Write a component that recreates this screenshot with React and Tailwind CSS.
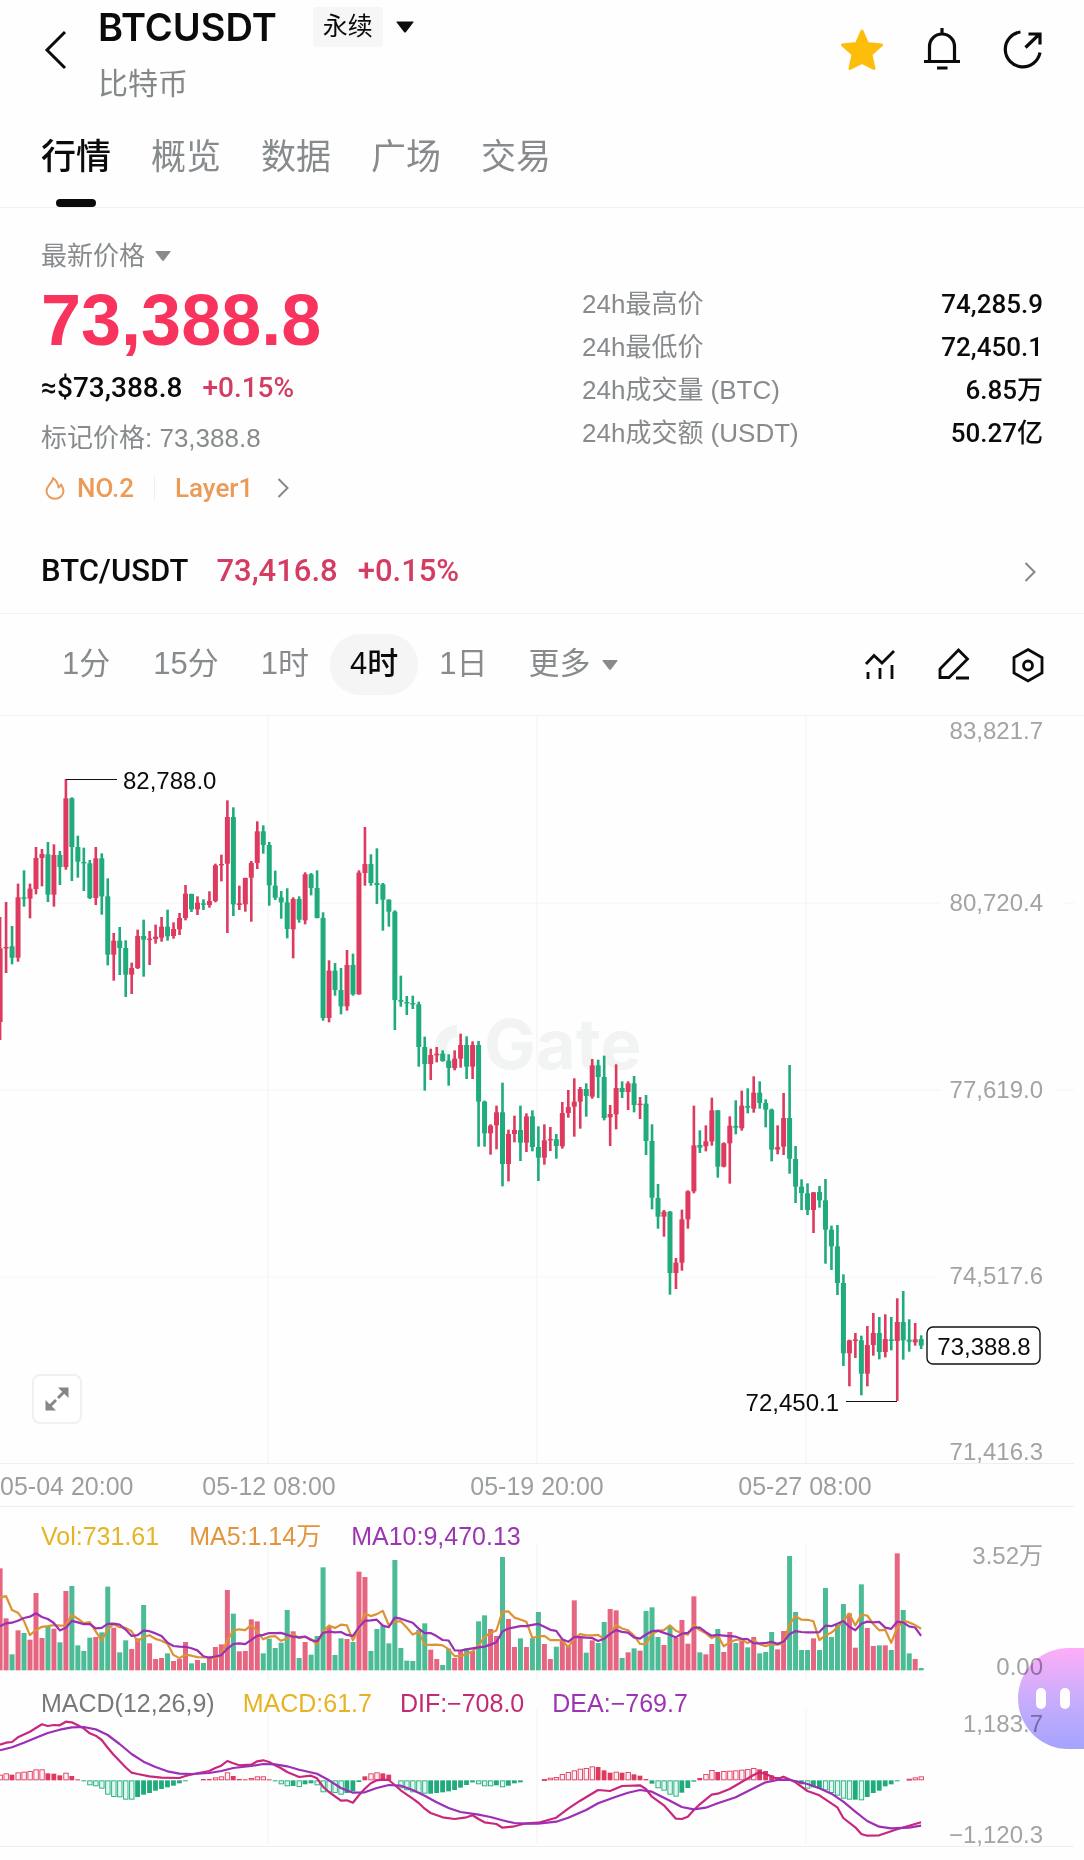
import React from "react";

const UP = "#de3a5f";
const DOWN = "#1fab7b";
const STEP = 5.981;
const FONT = '"Liberation Sans", "Noto Sans CJK SC", sans-serif';

// Each candle: direction, high, body top, body bottom, low (thirds of a pixel below the chart origin)
const CANDLES = `
R618,712,933,987 R573,708,711,786 G645,706,740,760 R518,559,740,752 G478,559,563,587 R518,533,563,622
R408,441,534,550 R414,429,441,526 G393,430,551,573 R400,432,551,587 G420,432,468,522 R204,262,468,476
G259,262,408,510 G374,408,452,500 G410,453,457,540 G447,457,561,564 R408,442,561,582 G427,442,556,611
G502,556,731,763 R666,689,731,809 G648,689,711,792 G688,711,791,858 R755,771,791,849 R656,675,771,774
G626,675,686,797 R660,683,687,762 R641,677,684,698 R618,647,680,692 G596,647,676,689 R634,654,675,683
R606,621,655,672 R522,548,621,628 G548,549,595,603 R556,575,595,612 G565,577,580,597 R541,570,582,590
R458,463,570,574 R431,459,463,511 R268,318,458,666 G289,318,580,615 R524,577,582,597 R500,501,580,602
R450,456,500,632 R331,361,456,474 G343,361,402,428 G393,402,523,584 G479,524,560,567 G540,559,574,623
G532,574,654,682 R559,564,655,742 G556,564,626,635 R484,490,628,640 G486,490,531,553 G478,531,621,622
G604,621,921,929 R748,779,921,934 G756,779,837,854 G771,837,886,910 R717,762,886,899 G728,762,850,854
R478,485,850,851 R348,459,486,524 G430,459,516,524 G412,516,522,579 G516,520,566,659 G565,566,602,647
G598,602,867,957 G794,867,872,887 G855,873,877,912 G854,876,880,894 G872,880,1008,1067 G977,1008,1059,1139
R1013,1032,1059,1107 R1008,1028,1033,1054 G1018,1028,1050,1052 G1030,1049,1071,1124 R1018,1043,1071,1078
R968,1002,1043,1070 G976,1002,1067,1104 R991,1002,1067,1104 G990,1002,1172,1307 G1169,1172,1267,1307
R1240,1244,1267,1331 R1184,1204,1243,1315 G1115,1204,1359,1426 R1256,1269,1359,1411 R1214,1257,1269,1294
G1184,1257,1295,1350 R1207,1216,1295,1323 G1198,1216,1308,1321 G1246,1308,1340,1410 R1240,1288,1340,1361
R1248,1284,1288,1320 G1269,1285,1305,1343 R1173,1206,1306,1313 R1137,1188,1206,1220 R1102,1172,1187,1277
R1128,1134,1172,1253 G1117,1134,1155,1217 R1044,1063,1157,1163 G1046,1063,1098,1161 G1034,1098,1221,1228
R1182,1209,1219,1305 R1060,1131,1210,1255 G1111,1131,1143,1161 R1111,1117,1143,1197 G1095,1117,1182,1204
R1158,1178,1182,1224 G1152,1178,1290,1332 G1240,1290,1460,1495 G1419,1461,1517,1553 R1497,1502,1517,1577
G1500,1502,1686,1751 R1641,1655,1686,1734 R1496,1525,1655,1679 R1438,1441,1525,1553 R1184,1303,1441,1447
G1258,1302,1310,1326 R1243,1291,1306,1321 R1160,1198,1291,1304 G1197,1198,1367,1400 R1294,1297,1367,1369
R1216,1244,1297,1418 G1168,1245,1250,1270 R1139,1184,1252,1259 G1132,1185,1190,1207 R1096,1145,1193,1205
G1111,1145,1176,1193 G1165,1176,1196,1249 G1193,1196,1316,1351 R1243,1308,1316,1330 R1146,1221,1307,1332
G1062,1221,1343,1388 G1305,1344,1427,1476 G1405,1427,1446,1497 G1417,1447,1497,1512 R1443,1444,1497,1566
G1425,1443,1468,1490 G1404,1468,1556,1658 G1544,1556,1606,1677 G1542,1606,1716,1752 G1690,1716,1927,1965
R1886,1888,1927,2026 R1866,1885,1890,1941 G1874,1888,1988,2053 R1845,1902,1988,2026 R1806,1866,1902,1934
G1818,1866,1923,1945 R1810,1884,1923,1939 G1818,1885,1890,1918 R1762,1833,1890,2070 G1740,1833,1888,1946
G1825,1886,1892,1922 R1836,1885,1894,1904 G1873,1884,1904,1914`
  .trim()
  .split(/\s+/)
  .map((s) => {
    const [high, top, bottom, low] = s.slice(1).split(",").map(Number);
    return { color: s[0] === "R" ? UP : DOWN, high, top, bottom, low };
  });

// Top edge of each volume bar; the baseline is at 631
const VOLUME = [
  325, 475, 583, 511, 519, 539, 399, 534, 500, 506, 547, 393, 378, 556, 573, 533, 531, 517, 380, 503, 577, 541, 567,
  535, 435, 550, 597, 594, 580, 603, 597, 546, 610, 600, 609, 594, 561, 553, 390, 461, 574, 573, 478, 484, 580, 536,
  564, 548, 450, 514, 594, 546, 584, 528, 322, 501, 585, 535, 537, 546, 335, 351, 573, 507, 497, 550, 300, 564, 602,
  603, 510, 490, 569, 597, 615, 566, 594, 570, 565, 573, 484, 466, 507, 528, 291, 477, 561, 535, 561, 535, 456, 552,
  597, 560, 541, 557, 421, 533, 578, 541, 549, 486, 447, 451, 594, 577, 565, 572, 453, 442, 531, 555, 500, 534, 480,
  551, 409, 577, 583, 552, 507, 576, 516, 549, 543, 562, 531, 580, 576, 516, 568, 513, 288, 456, 570, 570, 535, 570,
  384, 531, 495, 432, 460, 563, 373, 504, 558, 556, 556, 570, 280, 450, 580, 597, 624,
];
const BASE = 631;

function movingAverage(n, seed) {
  return VOLUME.map((_, i) =>
    i < seed.length ? seed[i] : VOLUME.slice(i - n + 1, i + 1).reduce((a, b) => a + b, 0) / n
  );
}
const MA5 = movingAverage(5, [413, 408, 450, 458]);
const MA10 = movingAverage(10, [499, 490, 488, 482, 474, 470, 460, 471, 477]);

// MACD histogram; a trailing h marks a hollow bar
const HIST =
  "17h 21h 17 24h 26h 28h 33h 33h 21 20 15 23h 13 3 -2 -15h -18h -25h -43h -50h -51h -58h -58h -50 -43 -38 -31 -26 -21 -16 -9 -3 0 0 4 4 9h 12h 24h 13 4 3 7h 12h 12h 3 -3 -12h -18h -17 -20h -12 -9 -15h -36h -36h -38h -43h -38 -33 -5 12 21h 24h 21 17 0 -24h -30h -36h -38h -40h -40 -38 -36 -33 -29 -22 -14 -6 -12h -18h -18h -15 -21h -16 -9 -6 0 0 0 4h 8h 10h 19h 25h 30h 35h 37h 42h 40 30 23 26h 23 25h 18 14 4 -10 -24h -31h -43h -49h -37 -23 -4 7 19h 31h 25 28h 29h 30h 32h 34h 37h 33 28 15 10 5 2 -2 -12 -25h -21 -25 -30h -38h -46h -55h -58h -58 -60h -50 -38 -31 -18 -12 -3 0 5h 9h 12h"
    .split(" ")
    .map((s) => ({ value: parseInt(s, 10), hollow: s.endsWith("h") }));
const ZERO = 961;

const DIF = [
  [0, 854], [1, 848], [2, 846], [3, 832], [5, 815], [7, 793], [8, 798], [9, 795], [10, 796], [11, 785], [12, 787],
  [13, 796], [14, 805], [15, 820], [16, 827], [17, 840], [18, 863], [19, 884], [20, 903], [21, 922], [22, 938],
  [23, 942], [25, 949], [27, 953], [30, 954], [31, 948], [33, 940], [35, 933], [36, 924], [37, 917], [38, 903],
  [39, 910], [40, 916], [42, 914], [43, 904], [44, 901], [45, 906], [46, 916], [47, 925], [48, 936], [50, 951],
  [52, 947], [53, 955], [54, 980], [55, 996], [57, 1022], [58, 1021], [59, 1028], [60, 1006], [61, 986], [62, 970],
  [63, 961], [64, 959], [65, 960], [66, 975], [67, 991], [69, 1016], [70, 1029], [71, 1046], [72, 1059], [74, 1072],
  [76, 1077], [78, 1072], [79, 1066], [80, 1077], [81, 1087], [83, 1092], [84, 1103], [86, 1099], [88, 1090],
  [90, 1088], [93, 1073], [95, 1046], [97, 1022], [100, 990], [102, 993], [104, 978], [107, 976], [108, 987],
  [109, 1010], [111, 1036], [113, 1076], [114, 1077], [115, 1070], [116, 1050], [117, 1033], [119, 1004],
  [120, 1001], [122, 987], [124, 966], [126, 945], [127, 937], [128, 942], [130, 957], [131, 950], [133, 967],
  [135, 993], [137, 1006], [140, 1042], [141, 1074], [143, 1102], [144, 1122], [145, 1127], [147, 1126],
  [150, 1108], [152, 1097], [154, 1087],
];
const DEA = [
  [0, 871], [2, 862], [4, 848], [6, 833], [8, 819], [10, 809], [12, 802], [14, 801], [16, 808], [18, 825], [20, 852],
  [22, 882], [24, 905], [26, 921], [28, 934], [30, 941], [32, 942], [35, 939], [37, 933], [39, 924], [42, 918],
  [44, 912], [46, 913], [48, 919], [50, 929], [53, 941], [55, 961], [57, 984], [59, 998], [61, 997], [63, 984],
  [65, 975], [67, 977], [69, 990], [71, 1007], [73, 1027], [75, 1044], [77, 1056], [80, 1064], [82, 1071],
  [84, 1081], [86, 1089], [88, 1091], [90, 1091], [93, 1085], [95, 1073], [98, 1050], [100, 1030], [103, 1010],
  [105, 998], [107, 990], [109, 995], [112, 1022], [114, 1041], [116, 1048], [118, 1043], [120, 1030], [123, 1012],
  [126, 985], [128, 967], [130, 960], [132, 959], [135, 972], [137, 985], [139, 1001], [141, 1025], [143, 1055],
  [145, 1083], [147, 1100], [149, 1105], [152, 1103], [154, 1097],
];

const line = (pts) => pts.map(([i, y]) => `${(i * STEP).toFixed(1)},${(y / 3).toFixed(1)}`).join(" ");
const series = (vals) => line(vals.map((y, i) => [i, y]));

const GRID_X = [268, 537, 806];
const AXIS = [
  ["83,821.7", 28],
  ["80,720.4", 200],
  ["77,619.0", 387],
  ["74,517.6", 573],
  ["71,416.3", 749],
];

function Grid({ from, to }) {
  return GRID_X.map((x) => <path key={x} d={`M${x} ${from}V${to}`} stroke="#f2f2f3" strokeWidth="1" />);
}

function PriceChart() {
  return (
    <svg viewBox="0 5 1084 790" className="block w-full overflow-visible" fontFamily={FONT} fontSize="24" role="img" aria-label="BTCUSDT 4时 K线">
      <g fill="none">
        <path d="M0 192H940M1064 192H1074M0 379H940M1055 379H1074" stroke="#f3f4f4" />
        <path d="M0 566H940" stroke="#f8f8f8" />
        <path d="M0 752.5H1074" stroke="#efeff0" />
        <Grid from={5} to={752} />
      </g>
      <g fill="#f2f4f4">
        <text x="484" y="358" fontFamily="Inter" fontWeight="700" fontSize="69">Gate</text>
        <path d="M457 314a22 22 0 0 0 0 44v-12a10 10 0 0 1 0-20z" />
      </g>
      <g>
        {CANDLES.map((c, i) => (
          <g key={i} fill={c.color}>
            <rect x={i * STEP - 1.2} y={c.high / 3} width="2.6" height={(c.low - c.high) / 3} />
            <rect x={i * STEP - 2.4} y={c.top / 3} width="5" height={Math.max((c.bottom - c.top) / 3, 1.4)} />
          </g>
        ))}
      </g>
      <path d="M66 68.5H117M846 690.5H897" stroke="#111" strokeWidth="1.2" />
      <g fill="#0b0b0b">
        <text x="123" y="78">82,788.0</text>
        <text x="839" y="700" textAnchor="end">72,450.1</text>
      </g>
      <g fill="#a1a3a5" textAnchor="end">
        {AXIS.map(([t, y]) => (
          <text key={t} x="1043" y={y}>{t}</text>
        ))}
      </g>
      <rect x="927" y="616" width="113" height="37" rx="6" fill="#fff" stroke="#111" strokeWidth="1.4" />
      <text x="984" y="644" textAnchor="middle" fill="#0b0b0b">73,388.8</text>
      <g fill="#9c9fa1" textAnchor="middle" fontSize="25">
        <text x="0" y="784" textAnchor="start">05-04 20:00</text>
        <text x="269" y="784">05-12 08:00</text>
        <text x="537" y="784">05-19 20:00</text>
        <text x="805" y="784">05-27 08:00</text>
      </g>
      <path d="M0 795.5H1074" stroke="#efeff0" />
    </svg>
  );
}

function VolumeChart() {
  return (
    <svg viewBox="0 90 1084 134" className="block w-full overflow-visible" fontFamily={FONT} fontSize="24" role="img" aria-label="成交量">
      <Grid from={84} to={220} />
      {VOLUME.map((top, i) => (
        <rect key={i} x={i * STEP - 2.4} y={top / 3} width="5" height={(BASE - top) / 3} fill={CANDLES[i].color === UP ? "#e66682" : "#4cbc96"} />
      ))}
      <g fill="none" strokeWidth="2.2" strokeLinejoin="round">
        <polyline points={series(MA5)} stroke="#dc9432" />
        <polyline points={series(MA10)} stroke="#9c2fb4" />
      </g>
      <g fill="#a1a3a5" textAnchor="end">
        <text x="1043" y="104">3.52万</text>
        <text x="1043" y="215">0.00</text>
      </g>
    </svg>
  );
}

function MacdChart() {
  return (
    <svg viewBox="0 262 1084 138" className="block w-full overflow-visible" fontFamily={FONT} fontSize="24" role="img" aria-label="MACD">
      <Grid from={249} to={384} />
      {HIST.map(({ value, hollow }, i) => {
        if (value === 0) return null;
        const color = value > 0 ? UP : DOWN;
        const top = Math.min(ZERO, ZERO - value) / 3;
        const h = Math.max(Math.abs(value) / 3, 1);
        return hollow ? (
          <rect key={i} x={i * STEP - 2} y={top + 0.5} width="4.4" height={Math.max(h - 1, 1)} fill={value > 0 ? "#fff3f5" : "#e2f8f0"} stroke={color} strokeWidth="0.9" />
        ) : (
          <rect key={i} x={i * STEP - 2.4} y={top} width="4.8" height={h} fill={color} />
        );
      })}
      <g fill="none" strokeWidth="2.2" strokeLinejoin="round">
        <polyline points={line(DIF)} stroke="#c9277c" />
        <polyline points={line(DEA)} stroke="#9c2fb4" />
      </g>
      <g fill="#a1a3a5" textAnchor="end">
        <text x="1043" y="272">1,183.7</text>
        <text x="1043" y="383">−1,120.3</text>
      </g>
      <path d="M0 386.5H1074" stroke="#efeff0" />
    </svg>
  );
}

function Caret({ className }) {
  return (
    <svg viewBox="0 0 18 12" className={className} fill="currentColor" aria-hidden="true">
      <path d="M1 0.500H17Q18 0.500 17.300 1.500L10 11Q9 12 8 11L.7 1.500Q0 .5 1 .5z" />
    </svg>
  );
}

function Chevron({ className }) {
  return (
    <svg viewBox="0 0 12 20" className={className} fill="none" stroke="currentColor" strokeWidth="2" aria-hidden="true">
      <path d="M1.500 1L10.500 10L1.500 19" />
    </svg>
  );
}

const TABS = ["行情", "概览", "数据", "广场", "交易"];
const STATS = [
  ["24h最高价", "74,285.9"],
  ["24h最低价", "72,450.1"],
  ["24h成交量 (BTC)", "6.85万"],
  ["24h成交额 (USDT)", "50.27亿"],
];

export default function App() {
  return (
    <main className="relative w-full overflow-hidden bg-[#fefefe] text-[#0b0b0b] font-['Liberation_Sans','Noto_Sans_CJK_SC',sans-serif]">
      <header className="flex h-28 items-start justify-between pl-11 pr-10">
        <div className="flex">
          <button aria-label="返回" className="mt-7 h-11 w-6">
            <svg viewBox="0 0 24 44" className="h-11 w-6" fill="none" stroke="currentColor" strokeWidth="3">
              <path d="M21 4L3 22L21 40" />
            </svg>
          </button>
          <div className="ml-[30px]">
            <div className="flex h-[54px] items-center">
              <h1 className="text-[38px] leading-none font-semibold font-['Inter',sans-serif]">BTCUSDT</h1>
              <button className="ml-9 flex items-center">
                <span className="flex h-10 items-center rounded bg-[#f6f6f6] px-2.5 text-[25px]">永续</span>
                <Caret className="ml-3 h-3 w-5" />
              </button>
            </div>
            <p className="mt-3 text-[30px] leading-9 text-[#85888a]">比特币</p>
          </div>
        </div>
        <div className="mt-7 flex gap-9">
          <button aria-label="收藏" className="size-11">
            <svg viewBox="0 0 44 44" className="size-11" fill="#fcbd0b" stroke="#fcbd0b" strokeWidth="3" strokeLinejoin="round">
              <path d="M22 3L27.500 15.500L41.500 17L31 26.500L34 40.500L22 34.500L10 40.500L13 26.500L2.500 17L16.500 15.500z" />
            </svg>
          </button>
          <button aria-label="提醒" className="size-11">
            <svg viewBox="0 0 44 44" className="size-11" fill="none" stroke="currentColor" strokeWidth="3.200">
              <path d="M22 0V5M9.500 33V18.500a12.500 12.500 0 0 1 25 0V33M4 33.500H40M17 40H27.500" />
            </svg>
          </button>
          <button aria-label="分享" className="size-11">
            <svg viewBox="0 0 44 44" className="size-11" fill="none" stroke="currentColor" strokeWidth="3.200">
              <path d="M20.500 4A17.500 17.500 0 1 0 40 24.500M25.500 19.500L39 6.500M28.500 6H40V16.500" />
            </svg>
          </button>
        </div>
      </header>

      <nav className="flex h-24 gap-10 border-b border-[#f1f1f2] pl-[41px]">
        {TABS.map((t, i) => (
          <a key={t} href="#" aria-current={i === 0 ? "page" : undefined} className={i === 0 ? "flex flex-col items-center justify-between pt-5 text-[35px] leading-[50px]" : "flex flex-col items-center pt-5 text-[35px] leading-[50px] text-[#888b8d]"}>
            <span className={i === 0 ? "font-medium" : undefined}>{t}</span>
            {i === 0 && <span className="h-2 w-10 rounded-full bg-[#0b0b0b]" />}
          </a>
        ))}
      </nav>

      <section className="flex items-start px-[41px] pt-7">
        <div className="flex-1">
          <button className="flex items-center text-[26px] leading-10 text-[#888b8d]">
            最新价格
            <Caret className="ml-2.5 h-3 w-4" />
          </button>
          <p className="mt-2 text-[72px] leading-[72px] font-bold text-[#f8335d]">73,388.8</p>
          <p className="mt-3 flex gap-5 text-[28px] leading-10 font-medium font-['Roboto',sans-serif]">
            <span>≈$73,388.8</span>
            <span className="text-[#d43c62]">+0.15%</span>
          </p>
          <p className="mt-3 text-[26px] leading-9 text-[#888b8d]">标记价格: 73,388.8</p>
          <button className="mt-3.5 flex h-9 items-center text-[26px] font-medium text-[#eb9a58] font-['Roboto',sans-serif]">
            <svg viewBox="0 0 20 24" className="ml-1 h-6 w-5" fill="none" stroke="currentColor" strokeWidth="2" strokeLinejoin="round">
              <path d="M8 2C8.500 6 1.500 9.500 1.500 15a8.300 7.500 0 0 0 17 0C18.500 12 17 10.500 16 8.500C15.500 10 15 11 13.500 11.500C13 7.500 11 4 8 2z" />
            </svg>
            <span className="ml-3">NO.2</span>
            <span className="ml-5 h-6 w-px bg-[#efefef]" />
            <span className="ml-5">Layer1</span>
            <Chevron className="ml-6 h-5 w-3 text-[#85888a]" />
          </button>
        </div>
        <dl className="mt-[47px] w-[461px]">
          {STATS.map(([k, v]) => (
            <div key={k} className="flex h-[43px] items-center justify-between text-[26px]">
              <dt className="text-[#888b8d]">{k}</dt>
              <dd className="font-medium font-['Roboto','Noto_Sans_CJK_SC',sans-serif]">{v}</dd>
            </div>
          ))}
        </dl>
      </section>

      <a href="#" className="mt-6 flex h-[84px] items-center border-b border-[#f1f1f2] pl-[41px] pr-12 text-[31px] font-medium font-['Roboto',sans-serif]">
        <span>BTC/USDT</span>
        <span className="ml-7 text-[#d43c62]">73,416.8</span>
        <span className="ml-5 text-[#d43c62]">+0.15%</span>
        <Chevron className="ml-auto h-5 w-3 text-[#85888a]" />
      </a>

      <div className="flex h-[102px] items-center justify-between border-b border-[#f1f1f2] pl-10 pr-10 text-[31px] text-[#888b8d]">
        <div className="flex items-center">
          <button className="px-[22px]">1分</button>
          <button className="px-[21px]">15分</button>
          <button className="px-[21px]">1时</button>
          <button aria-pressed="true" className="h-[61px] rounded-[30px] bg-[#f5f5f6] px-5 font-medium text-[#0b0b0b]">4时</button>
          <button className="px-[21px]">1日</button>
          <button className="flex items-center pl-5">
            更多
            <Caret className="ml-3 h-3 w-4" />
          </button>
        </div>
        <div className="flex gap-[42px] text-[#0b0b0b]">
          <button aria-label="指标" className="h-9 w-8">
            <svg viewBox="0 0 32 36" className="h-9 w-8" fill="none" stroke="currentColor" strokeWidth="2.800">
              <path d="M2 17L10 8.500L18 16L30 4M4 25V32M16 21V32M28 18V32" />
            </svg>
          </button>
          <button aria-label="画线" className="h-9 w-8">
            <svg viewBox="0 0 32 36" className="h-9 w-8" fill="none" stroke="currentColor" strokeWidth="2.800">
              <path d="M2 30.500V22L20.500 3L29.500 12L11 30.500zM18 31H31" />
            </svg>
          </button>
          <button aria-label="设置" className="h-9 w-8">
            <svg viewBox="0 0 32 36" className="h-9 w-8 overflow-visible" fill="none" stroke="currentColor" strokeWidth="2.800">
              <path d="M16 2.500L30 10.500V26L16 34L2 26V10.500z" />
              <circle cx="16" cy="18.500" r="4.500" />
            </svg>
          </button>
        </div>
      </div>

      <section className="relative">
        <PriceChart />
        <button aria-label="全屏" className="absolute bottom-[82px] left-8 flex size-[50px] items-center justify-center rounded-lg border-2 border-[#eff0f0] bg-white">
          <svg viewBox="0 0 24 24" className="size-6" fill="#868686" stroke="#868686" aria-hidden="true">
            <path d="M13 .5H23.500V11zM.5 13V23.500H11z" stroke="none" />
            <path d="M13 11L19 5M11 13L5 19" strokeWidth="3" />
          </svg>
        </button>
      </section>

      <section>
        <div className="flex h-11 items-end gap-[30px] pl-[41px] text-[25px] leading-7">
          <span className="text-[#e6b422]">Vol:731.61</span>
          <span className="text-[#e2953c]">MA5:1.14万</span>
          <span className="text-[#9c35b4]">MA10:9,470.13</span>
        </div>
        <VolumeChart />
      </section>

      <section>
        <div className="flex h-[38px] items-center gap-7 pl-[41px] text-[25px] leading-8">
          <span className="text-[#77797b]">MACD(12,26,9)</span>
          <span className="text-[#e6b422]">MACD:61.7</span>
          <span className="text-[#c12b74]">DIF:−708.0</span>
          <span className="text-[#9c35b4]">DEA:−769.7</span>
        </div>
        <MacdChart />
      </section>

      <button aria-label="助手" className="absolute right-0 bottom-[111px] flex h-[101px] w-[66px] items-center gap-3.5 rounded-l-full bg-linear-to-b from-[#ffaef9] via-[#c9aefc] to-[#a6a4ff] pl-[18px] mix-blend-multiply">
        <span className="h-[21px] w-2.5 rounded-full bg-white" />
        <span className="h-[21px] w-2.5 rounded-full bg-white" />
      </button>
    </main>
  );
}
